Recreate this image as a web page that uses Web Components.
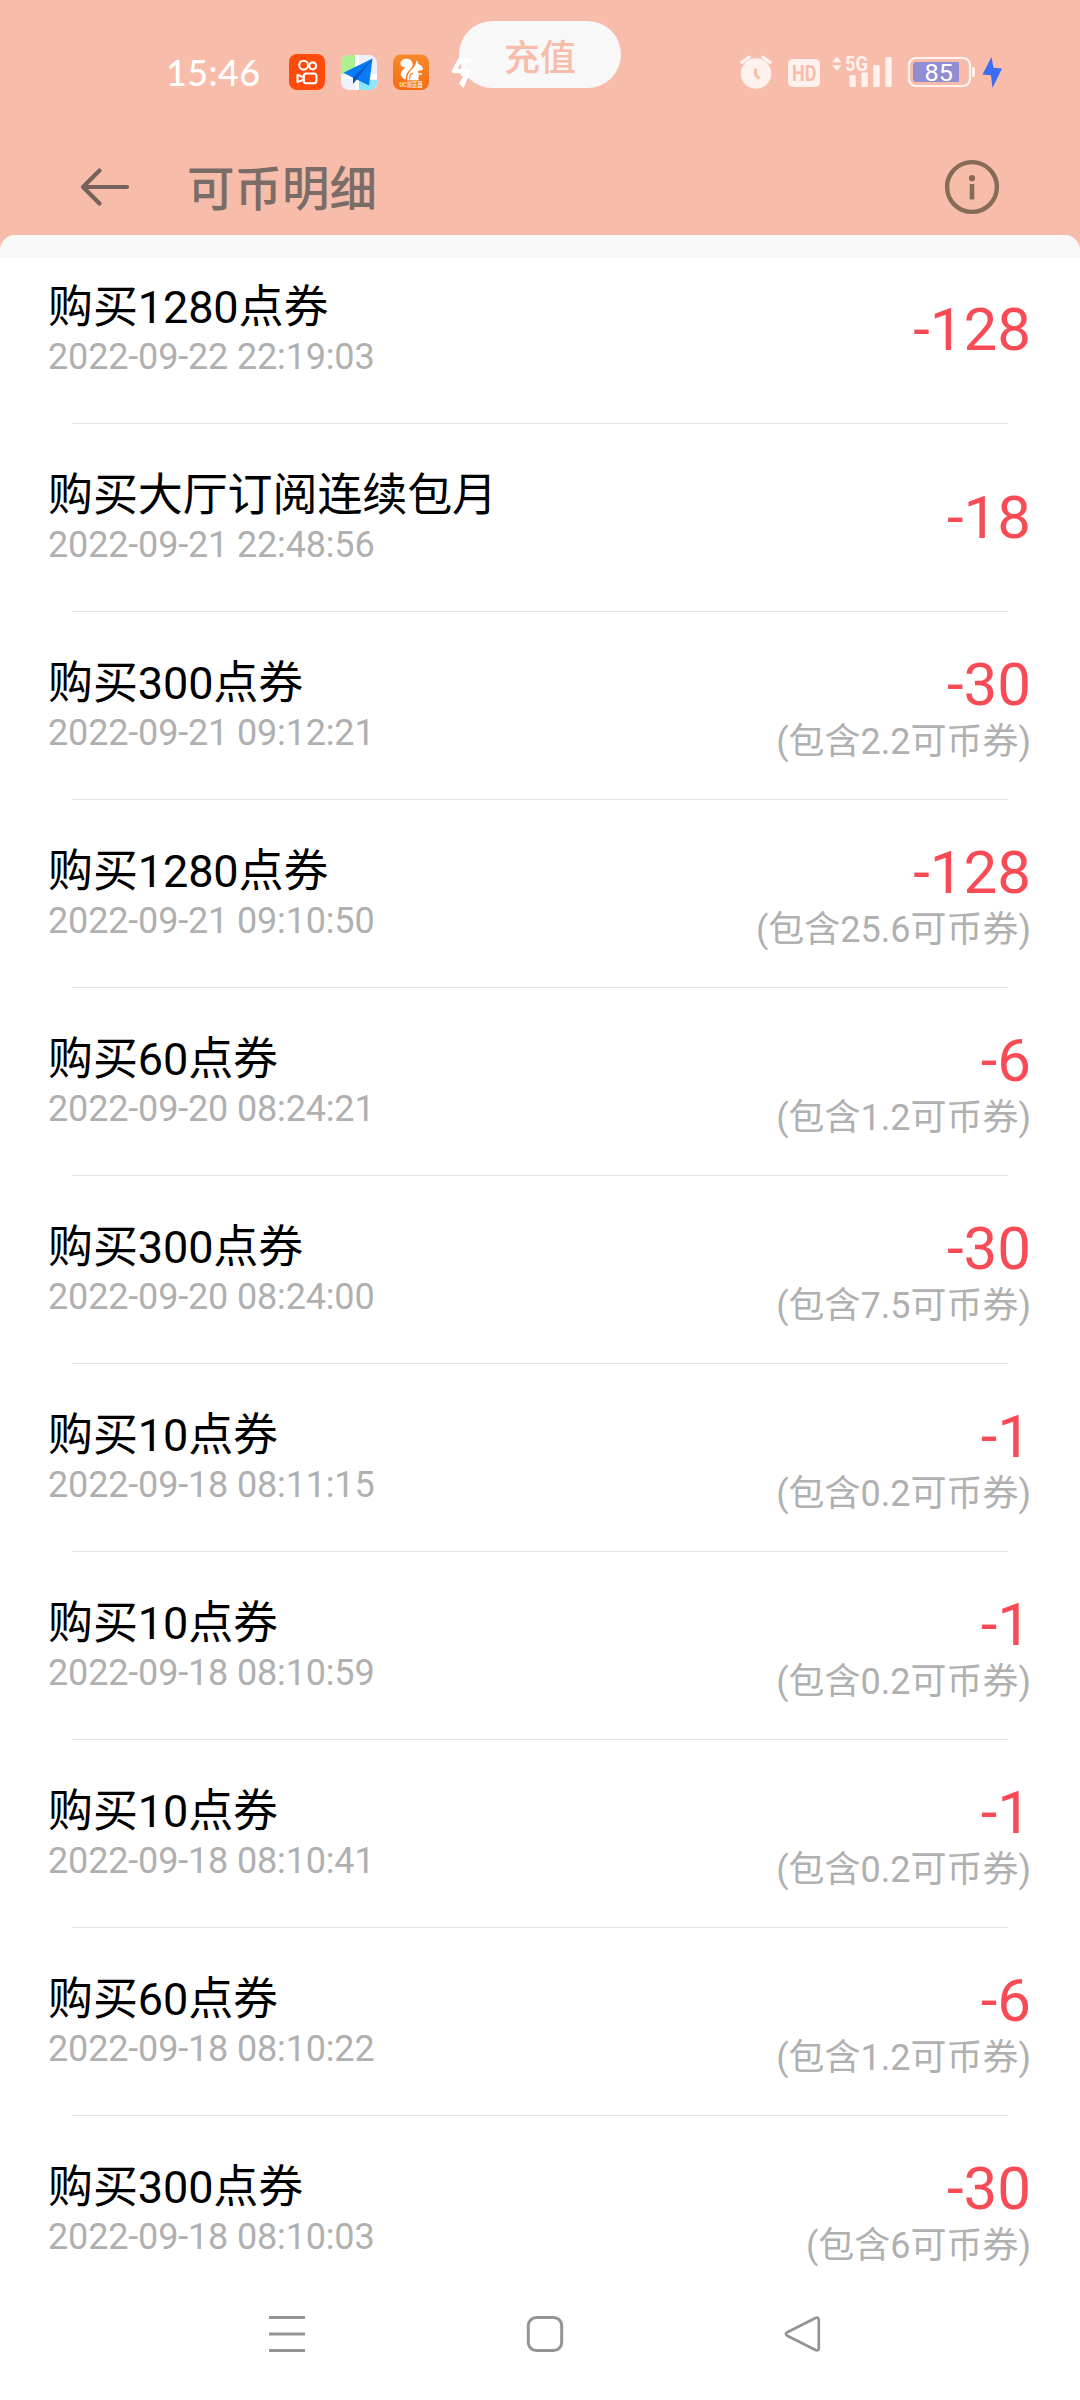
<!DOCTYPE html>
<html lang="zh-CN">
<head>
<meta charset="utf-8">
<title>可币明细</title>
<style>
body{margin:0;background:#fff;font-family:Roboto,"Noto Sans CJK SC",sans-serif}
</style>
</head>
<body>
<coin-page></coin-page>
<script>
const define=(name,html,setup)=>customElements.define(name,class extends HTMLElement{
  connectedCallback(){
    if(this.shadowRoot)return;
    const t=document.createElement('template');
    t.innerHTML=html;
    this.attachShadow({mode:'open'}).append(t.content.cloneNode(true));
    if(setup)setup(this,this.shadowRoot);
  }
});

define('status-bar',`
<style>
:host{display:flex;justify-content:space-between;height:36px;padding:54px 78px 0 166px;color:#fff}
div{display:flex;align-items:center}
svg{display:block;flex:none}
.time{font:500 36px/36px Lato,sans-serif;width:123px;letter-spacing:.4px;white-space:nowrap}
.apps{gap:16px}
.apps svg:last-child{margin-left:5px}
</style>
<div>
  <span class="time">15:46</span>
  <div class="apps">
    <svg width="36" height="36" viewBox="0 0 36 36"><rect width="36" height="36" rx="8" fill="#fe4a0b"/><g fill="none" stroke="#fff" stroke-width="2.1" stroke-linejoin="round"><circle cx="14.6" cy="11.2" r="4.4"/><circle cx="23.7" cy="11.9" r="3.5"/><rect x="14.8" y="19.5" width="12.6" height="9.8" rx="2.6"/><path d="M14.5 23.2 8.5 20.8v7.3l6-2.4"/></g></svg>
    <svg width="36" height="36" viewBox="0 0 36 36"><defs><clipPath id="m"><rect y="1" width="36" height="35" rx="8"/></clipPath></defs><g clip-path="url(#m)"><path fill="#edf1fb" d="M0 0h36v36H0z"/><path fill="#adf08f" d="M0 0h14v20H0z"/><path fill="#fff" d="M14 0h4v36h-4zM0 22l36-2v5H0z"/><path fill="#8be5fb" d="M18 26h18v10H18z"/></g><path d="M31.500 4.500 2.500 18.800l9.500 5v6l3.600-4.200 12.400 6z" fill="#087bf5"/><path d="M31.500 4.500 12 23.800v6l3.600-4.200z" fill="#0759cb"/></svg>
    <svg width="36" height="36" viewBox="0 0 36 36"><defs><linearGradient id="u" x2="0" y2="1"><stop stop-color="#f78a2c"/><stop offset="1" stop-color="#f66b12"/></linearGradient></defs><rect y=".5" width="36" height="35.5" rx="8" fill="url(#u)"/><path d="M12.500 25.500C9 24 7 21.500 8 18.500c.8-2.300 3.500-3.500 4.200-5.500-2 .7-4.500-.5-4.700-3C7.300 6.500 10.500 4.500 14 4.800c4 .3 6.200 3.200 5.600 6.500-.6 3-3 4.200-4.800 6.700-1.400 2-2 4.500-2.300 7.500z" fill="#fff"/><path d="M23.500 6.500c1.100.9 1.700 2.100 1.800 3.500 2.400.9 4 2.300 4.600 4.400.3 1.300-.6 1.900-3.400 2-1.100.1-1.500.6-1.600 1.300 1.300 2.300 1.400 4.800.2 7.200l1.500 1.300H14.200c-.2-4.200.9-7.400 4-10.300 2.600-2.400 4.900-5.200 5.300-9.400z" fill="#fff"/><path d="M17 25.500c-1-3 .2-5.800 3-6.200" fill="none" stroke="#f67c20" stroke-width="1.200"/><path d="M19 7 12.500 19" stroke="#f67c20" stroke-width="0"/><circle cx="27.500" cy="20" r="1.300" fill="#fff"/><text x="18" y="33.400" text-anchor="middle" textLength="23" lengthAdjust="spacingAndGlyphs" font-size="6.500" font-weight="700" font-family="Roboto,'Noto Sans CJK SC',sans-serif" fill="#ffe2ca">UC浏览器</text></svg>
    <svg width="23" height="36" viewBox="0 0 23 36"><path d="M21.500 6.200H10L4 17h16.500" fill="none" stroke="#fff" stroke-width="4.500" stroke-linejoin="round"/><path d="M15.500 6 12 16" stroke="#fff" stroke-width="2.500"/><path d="M21.500 16 13.500 34 9 29.500l4-6.500-2.500-2.500 3-5z" fill="#fff"/></svg>
  </div>
</div>
<div>
  <svg width="264" height="36" viewBox="738 54 264 36">
    <g fill="#fff2ee">
      <circle cx="756" cy="73.500" r="15.200"/><path d="m741.800 62.300 7.200-5M770.200 62.300l-7.200-5" stroke="#fff2ee" stroke-width="3.400" stroke-linecap="round"/>
      <path d="M755.500 68.800v6.100l3.700 3.700" fill="none" stroke="#f8bcaa" stroke-width="3"/>
      <rect x="788" y="59" width="32" height="28" rx="5"/>
      <path d="m832 62.300 4.800-5.500 4.800 5.500zM832 65.200l4.800 5.500 4.800-5.500z"/>
      <rect x="849.500" y="75.300" width="6.300" height="11.700" rx="1"/><rect x="861.500" y="72.500" width="6.300" height="14.500" rx="1"/><rect x="873.300" y="65" width="6.400" height="22" rx="1"/><rect x="885.300" y="57" width="6.400" height="30" rx="1"/>
      <path d="M972 67h1.500q1.500 0 1.500 1.500v7q0 1.500-1.500 1.500H972z"/>
      <text x="845" y="70.700" textLength="23" lengthAdjust="spacingAndGlyphs" font-size="21" font-weight="700" font-family="Roboto,sans-serif">5G</text>
    </g>
    <text x="792" y="80.700" textLength="24.500" lengthAdjust="spacingAndGlyphs" font-size="22.500" font-weight="700" font-family="Roboto,sans-serif" fill="#f8bcaa">HD</text>
    <rect x="909" y="58" width="61" height="28" rx="7" fill="none" stroke="#fff2ee" stroke-width="2.200"/>
    <path d="M916 62h43v20h-43q-3 0-3-3V65q0-3 3-3z" fill="#928dd0"/>
    <text x="924.500" y="81" textLength="28.500" lengthAdjust="spacingAndGlyphs" font-size="24.500" font-family="Roboto,sans-serif" fill="#fff">85</text>
    <path d="M991.500 57 982.500 74.500l8.500.7L992.500 88 1002 68.500l-8.500-.7z" fill="#3b6cf5"/>
  </svg>
</div>`);

define('title-bar',`
<style>
:host{display:flex;align-items:center;height:56px;padding:69px 80px 20px 80px}
h1{margin:-3px auto 0 57px;font:500 47.500px/56px "Noto Sans CJK SC",sans-serif;color:#7a6d67}
svg{display:block;flex:none}
</style>
<svg width="50" height="40" viewBox="0 0 50 40"><path d="M19.500 3.500 3 20l16.500 16.500M3 20h44" fill="none" stroke="#75625c" stroke-width="4.200" stroke-linecap="round" stroke-linejoin="round"/></svg>
<h1><slot></slot></h1>
<svg width="56" height="56" viewBox="0 0 56 56"><circle cx="28" cy="28" r="24.900" fill="none" stroke="#866b57" stroke-width="4.400"/><circle cx="28" cy="19.200" r="3.100" fill="#866b57"/><path d="M25.700 25h4.600v15.500h-4.600z" fill="#866b57"/></svg>`);

define('recharge-pill',`
<style>
:host{display:flex;align-items:center;justify-content:center;width:162px;height:67px;border-radius:34px;background:#f8f8f8;color:#f8bcaa;font:500 36px/54px "Noto Sans CJK SC",sans-serif}
</style><span><slot></slot></span>`);

define('coin-record',`
<style>
:host{display:block;height:188px;box-sizing:border-box}
.row{display:flex;justify-content:space-between;height:187px;padding:0 49px 0 48px}
.left{padding-top:46px}
.name{font-size:45px;line-height:52px;letter-spacing:-.1px;color:#000}
.date{font-size:36px;line-height:46px;letter-spacing:-.16px;color:#b0b0b0}
.right{display:flex;flex-direction:column;align-items:flex-end;padding-top:59px}
.right.two{padding-top:38px}
.amount{font-size:60px;line-height:70px;color:#f84b55}
.note{font-size:36px;line-height:45px;color:#b0b0b0}
.line{height:1px;margin:0 72px;background:#e4e4e4}
div{white-space:nowrap}
</style>
<div class="row"><div class="left"><div class="name"><slot></slot></div><div class="date"></div></div>
<div class="right"><div class="amount"></div></div></div><div class="line"></div>`,(h,r)=>{
  r.querySelector('.date').textContent=h.getAttribute('date');
  r.querySelector('.amount').textContent=h.getAttribute('amount');
  if(h.hasAttribute('bonus')){
    const n=document.createElement('div');
    n.className='note';
    n.textContent='(包含'+h.getAttribute('bonus')+'可币券)';
    const right=r.querySelector('.right');
    right.classList.add('two');
    right.append(n);
  }
});

define('system-nav',`
<style>
:host{display:flex;justify-content:space-between;align-items:center;box-sizing:border-box;height:130px;padding:0 258px 2px 268px;background:#fff}
svg{display:block}
</style>
<svg width="38" height="38" viewBox="0 0 38 38"><path d="M1 2.500h36M1 19h36M1 35.500h36" stroke="#949494" stroke-width="3"/></svg>
<svg width="38" height="38" viewBox="0 0 38 38"><rect x="2.300" y="2.500" width="33.400" height="33" rx="8" fill="none" stroke="#949494" stroke-width="3"/></svg>
<svg width="38" height="38" viewBox="0 0 38 38"><path d="M31.500 3 3.300 17.200Q.5 19 3.300 20.800L31.500 35q3.300 1.300 3.300-2V5q0-3.300-3.300-2z" fill="none" stroke="#949494" stroke-width="2.700"/></svg>`);

define('coin-page',`
<style>
:host{display:flex;flex-direction:column;position:relative;width:1080px;height:2400px;overflow:hidden;background:#fff}
header{height:258px;flex:none;background:#f8bcaa;display:flex;flex-direction:column}
.lip{height:23px;flex:none;border-radius:15px 15px 0 0;background:#f8f8f8}
recharge-pill{position:absolute;left:459px;top:21px}
status-bar{position:relative;z-index:1}
main{flex:1;min-height:0;overflow:hidden}
.list{margin-top:-22px}
system-nav{flex:none}
</style>
<header><status-bar></status-bar><recharge-pill>充值</recharge-pill><title-bar>可币明细</title-bar><div class="lip"></div></header>
<main><div class="list"></div></main>
<system-nav></system-nav>`,(h,r)=>{
  const rows=[
    ['购买1280点券','2022-09-22 22:19:03','-128'],
    ['购买大厅订阅连续包月','2022-09-21 22:48:56','-18'],
    ['购买300点券','2022-09-21 09:12:21','-30','2.2'],
    ['购买1280点券','2022-09-21 09:10:50','-128','25.6'],
    ['购买60点券','2022-09-20 08:24:21','-6','1.2'],
    ['购买300点券','2022-09-20 08:24:00','-30','7.5'],
    ['购买10点券','2022-09-18 08:11:15','-1','0.2'],
    ['购买10点券','2022-09-18 08:10:59','-1','0.2'],
    ['购买10点券','2022-09-18 08:10:41','-1','0.2'],
    ['购买60点券','2022-09-18 08:10:22','-6','1.2'],
    ['购买300点券','2022-09-18 08:10:03','-30','6']
  ];
  const list=r.querySelector('.list');
  for(const [name,date,amount,bonus] of rows){
    const e=document.createElement('coin-record');
    e.textContent=name;
    e.setAttribute('date',date);
    e.setAttribute('amount',amount);
    if(bonus)e.setAttribute('bonus',bonus);
    list.append(e);
  }
});
</script>
</body>
</html>
